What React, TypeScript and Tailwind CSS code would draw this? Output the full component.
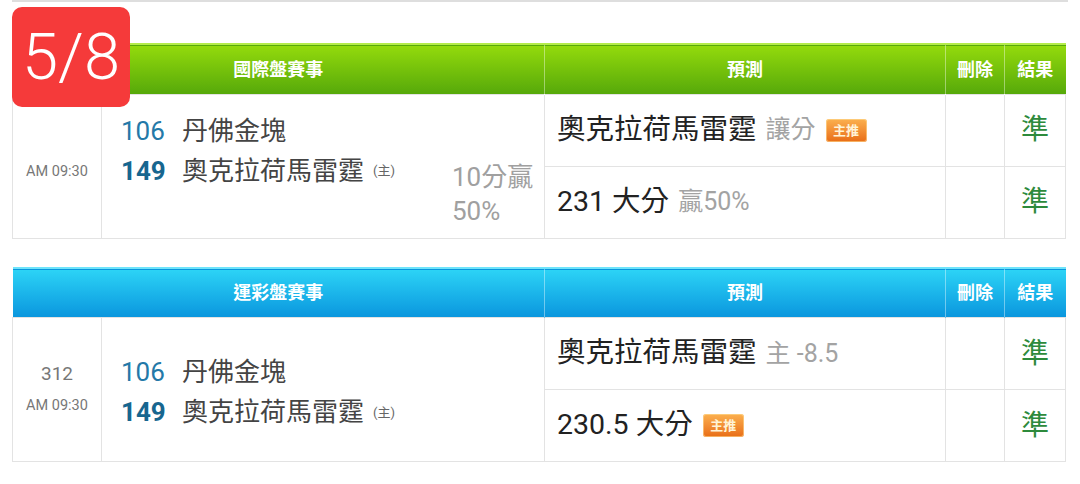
import React from 'react';

const FONT = "font-['Roboto','Noto_Sans_CJK_TC',sans-serif]";

function PushBadge() {
  return (
    <span className="inline-flex items-center justify-center w-[41px] h-[23px] rounded-[3px] bg-gradient-to-b from-[#fbb04e] to-[#e86d14] text-[13px] font-bold leading-none text-[#fff3d6] align-middle shadow-[inset_0_0_0_1px_rgba(255,220,150,0.6)]">
      主推
    </span>
  );
}

interface Pick {
  main: string;
  sub?: string;
  badge?: boolean;
  result: string;
}

interface Game {
  title: string;
  theme: 'green' | 'blue';
  code?: string;
  time: string;
  away: { no: string; name: string };
  home: { no: string; name: string };
  note?: string[];
  picks: Pick[];
}

const games: Game[] = [
  {
    title: '國際盤賽事',
    theme: 'green',
    time: 'AM 09:30',
    away: { no: '106', name: '丹佛金塊' },
    home: { no: '149', name: '奧克拉荷馬雷霆' },
    note: ['10分贏', '50%'],
    picks: [
      { main: '奧克拉荷馬雷霆', sub: '讓分', badge: true, result: '準' },
      { main: '231 大分', sub: '贏50%', result: '準' },
    ],
  },
  {
    title: '運彩盤賽事',
    theme: 'blue',
    code: '312',
    time: 'AM 09:30',
    away: { no: '106', name: '丹佛金塊' },
    home: { no: '149', name: '奧克拉荷馬雷霆' },
    picks: [
      { main: '奧克拉荷馬雷霆', sub: '主 -8.5', result: '準' },
      { main: '230.5 大分', badge: true, result: '準' },
    ],
  },
];

function GameTable({ game }: { game: Game }) {
  const head =
    game.theme === 'green'
      ? 'bg-gradient-to-b from-[#93da0c] to-[#56a90a] border-t-2 border-[#b4ec4a]'
      : 'bg-gradient-to-b from-[#2cd3f6] to-[#0a95dd] border-t-2 border-[#6ee4fb]';
  const th = 'h-[50px] text-[18px] font-bold text-white text-center p-0';
  const divider = 'border-l border-white/40';

  return (
    <table className="w-full border-collapse table-fixed">
      <colgroup>
        <col className="w-[89px]" />
        <col className="w-[443px]" />
        <col className="w-[401px]" />
        <col className="w-[59px]" />
        <col className="w-[61px]" />
      </colgroup>
      <thead>
        <tr className={head}>
          <th colSpan={2} className={th}>{game.title}</th>
          <th className={`${th} ${divider}`}>預測</th>
          <th className={`${th} ${divider}`}>刪除</th>
          <th className={`${th} ${divider}`}>結果</th>
        </tr>
      </thead>
      <tbody>
        {game.picks.map((p, i) => (
          <tr key={i} className="h-[72px]">
            {i === 0 && (
              <>
                <td rowSpan={2} className="border border-[#e3e3e3] text-center align-middle p-0">
                  {game.code && <div className="text-[19px] leading-[30px] text-[#777]">{game.code}</div>}
                  <div className={`text-[14.5px] leading-[30px] text-[#777] ${game.code ? 'mt-[2px]' : 'mt-[12px]'}`}>{game.time}</div>
                </td>
                <td rowSpan={2} className="border border-[#e3e3e3] p-0 pl-[19px] align-middle">
                  <div className="flex items-center justify-between">
                    <div className={game.note ? 'mb-[30px]' : 'mt-[6px]'}>
                      <div className="flex items-center h-[40px] text-[26px]">
                        <span className="w-[61px] text-[#2479a8]">{game.away.no}</span>
                        <span className="text-[#444]">{game.away.name}</span>
                      </div>
                      <div className="flex items-center h-[40px] text-[26px]">
                        <span className="w-[61px] font-bold text-[#17668f]">{game.home.no}</span>
                        <span className="text-[#444]">{game.home.name}</span>
                        <span className="ml-[9px] text-[13px] text-[#666]">(主)</span>
                      </div>
                    </div>
                    {game.note && (
                      <div className="w-[92px] mt-[56px] text-[26px] leading-[34px] text-[#a0a0a0]">
                        {game.note.map((n) => (
                          <div key={n}>{n}</div>
                        ))}
                      </div>
                    )}
                  </div>
                </td>
              </>
            )}
            <td className="border border-[#e3e3e3] p-0 pl-[12px] align-middle">
              <div className="flex items-center gap-[10px]">
                <span className="text-[28.5px] text-[#222]">{p.main}</span>
                {p.sub && <span className="text-[25px] text-[#a3a3a3] -ml-[1px]">{p.sub}</span>}
                {p.badge && <PushBadge />}
              </div>
            </td>
            <td className="border border-[#e3e3e3] p-0" />
            <td className="border border-[#e3e3e3] p-0 text-center text-[28px] text-[#2d8a3c]">{p.result}</td>
          </tr>
        ))}
      </tbody>
    </table>
  );
}

export default function App() {
  return (
    <div className={`relative w-[1080px] h-[484px] bg-white ${FONT}`}>
      <div className="mx-[12px] h-[2px] w-[1056px] bg-[#dedede]" />
      <div className="ml-[12px] w-[1053px]">
        <div className="pt-[41px]">
          <GameTable game={games[0]} />
        </div>
        <div className="pt-[28px]">
          <GameTable game={games[1]} />
        </div>
      </div>

      {/* page counter badge */}
      <div className="absolute left-[12px] top-[7px] w-[118px] h-[100px] rounded-[10px] bg-[#f53a3a] flex items-center justify-center text-white text-[65px] font-light leading-none">
        5/8
      </div>
    </div>
  );
}
